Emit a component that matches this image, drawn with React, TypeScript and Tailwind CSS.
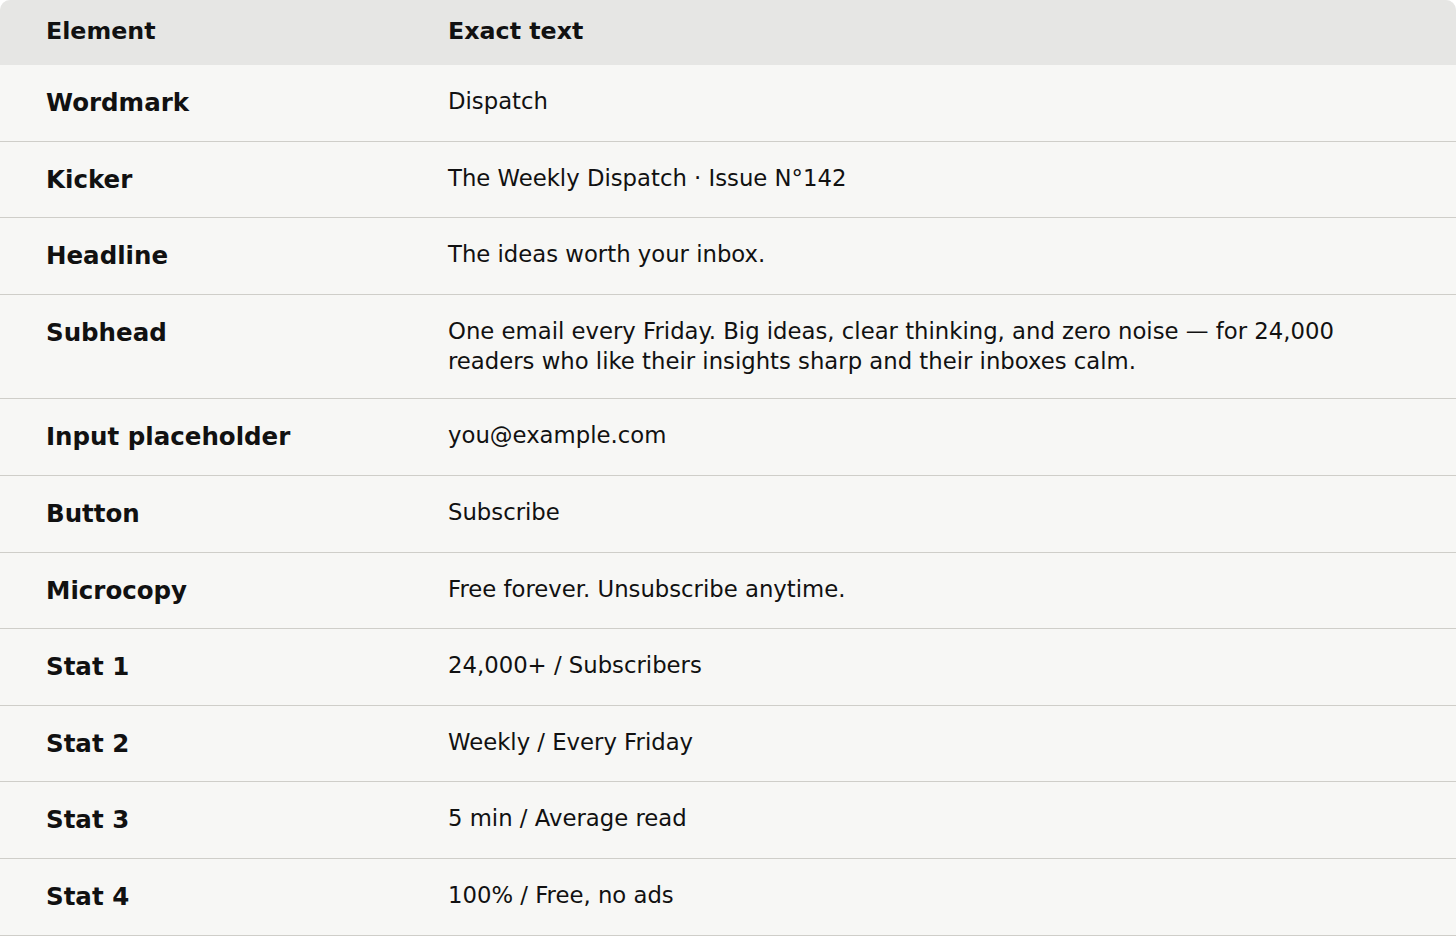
import React from "react";

const rows: [string, string][] = [
  ["Wordmark", "Dispatch"],
  ["Kicker", "The Weekly Dispatch · Issue N°142"],
  ["Headline", "The ideas worth your inbox."],
  [
    "Subhead",
    "One email every Friday. Big ideas, clear thinking, and zero noise — for 24,000 readers who like their insights sharp and their inboxes calm.",
  ],
  ["Input placeholder", "you@example.com"],
  ["Button", "Subscribe"],
  ["Microcopy", "Free forever. Unsubscribe anytime."],
  ["Stat 1", "24,000+ / Subscribers"],
  ["Stat 2", "Weekly / Every Friday"],
  ["Stat 3", "5 min / Average read"],
  ["Stat 4", "100% / Free, no ads"],
];

export default function App() {
  return (
    <div className="min-h-screen bg-white" style={{ fontFamily: '"DejaVu Sans", sans-serif' }}>
      <div className="rounded-t-[10px] overflow-hidden bg-[#f7f7f5] text-[#111]">
        <div className="grid grid-cols-[402px_1fr] bg-[#e6e6e4] px-[46px] h-[65px] items-center text-[23.75px] font-bold leading-[30px] pb-[4px]">
          <div>Element</div>
          <div>Exact text</div>
        </div>
        {rows.map(([k, v]) => (
          <div
            key={k}
            className="grid grid-cols-[402px_1fr] px-[46px] pt-[21px] pb-[22.6px] border-b border-[#cfcec9] items-start"
          >
            <div className="text-[24.5px] font-bold leading-[31px] pt-[1px]">{k}</div>
            <div className="text-[22.75px] leading-[30px] pr-[30px]">{v}</div>
          </div>
        ))}
      </div>
    </div>
  );
}
